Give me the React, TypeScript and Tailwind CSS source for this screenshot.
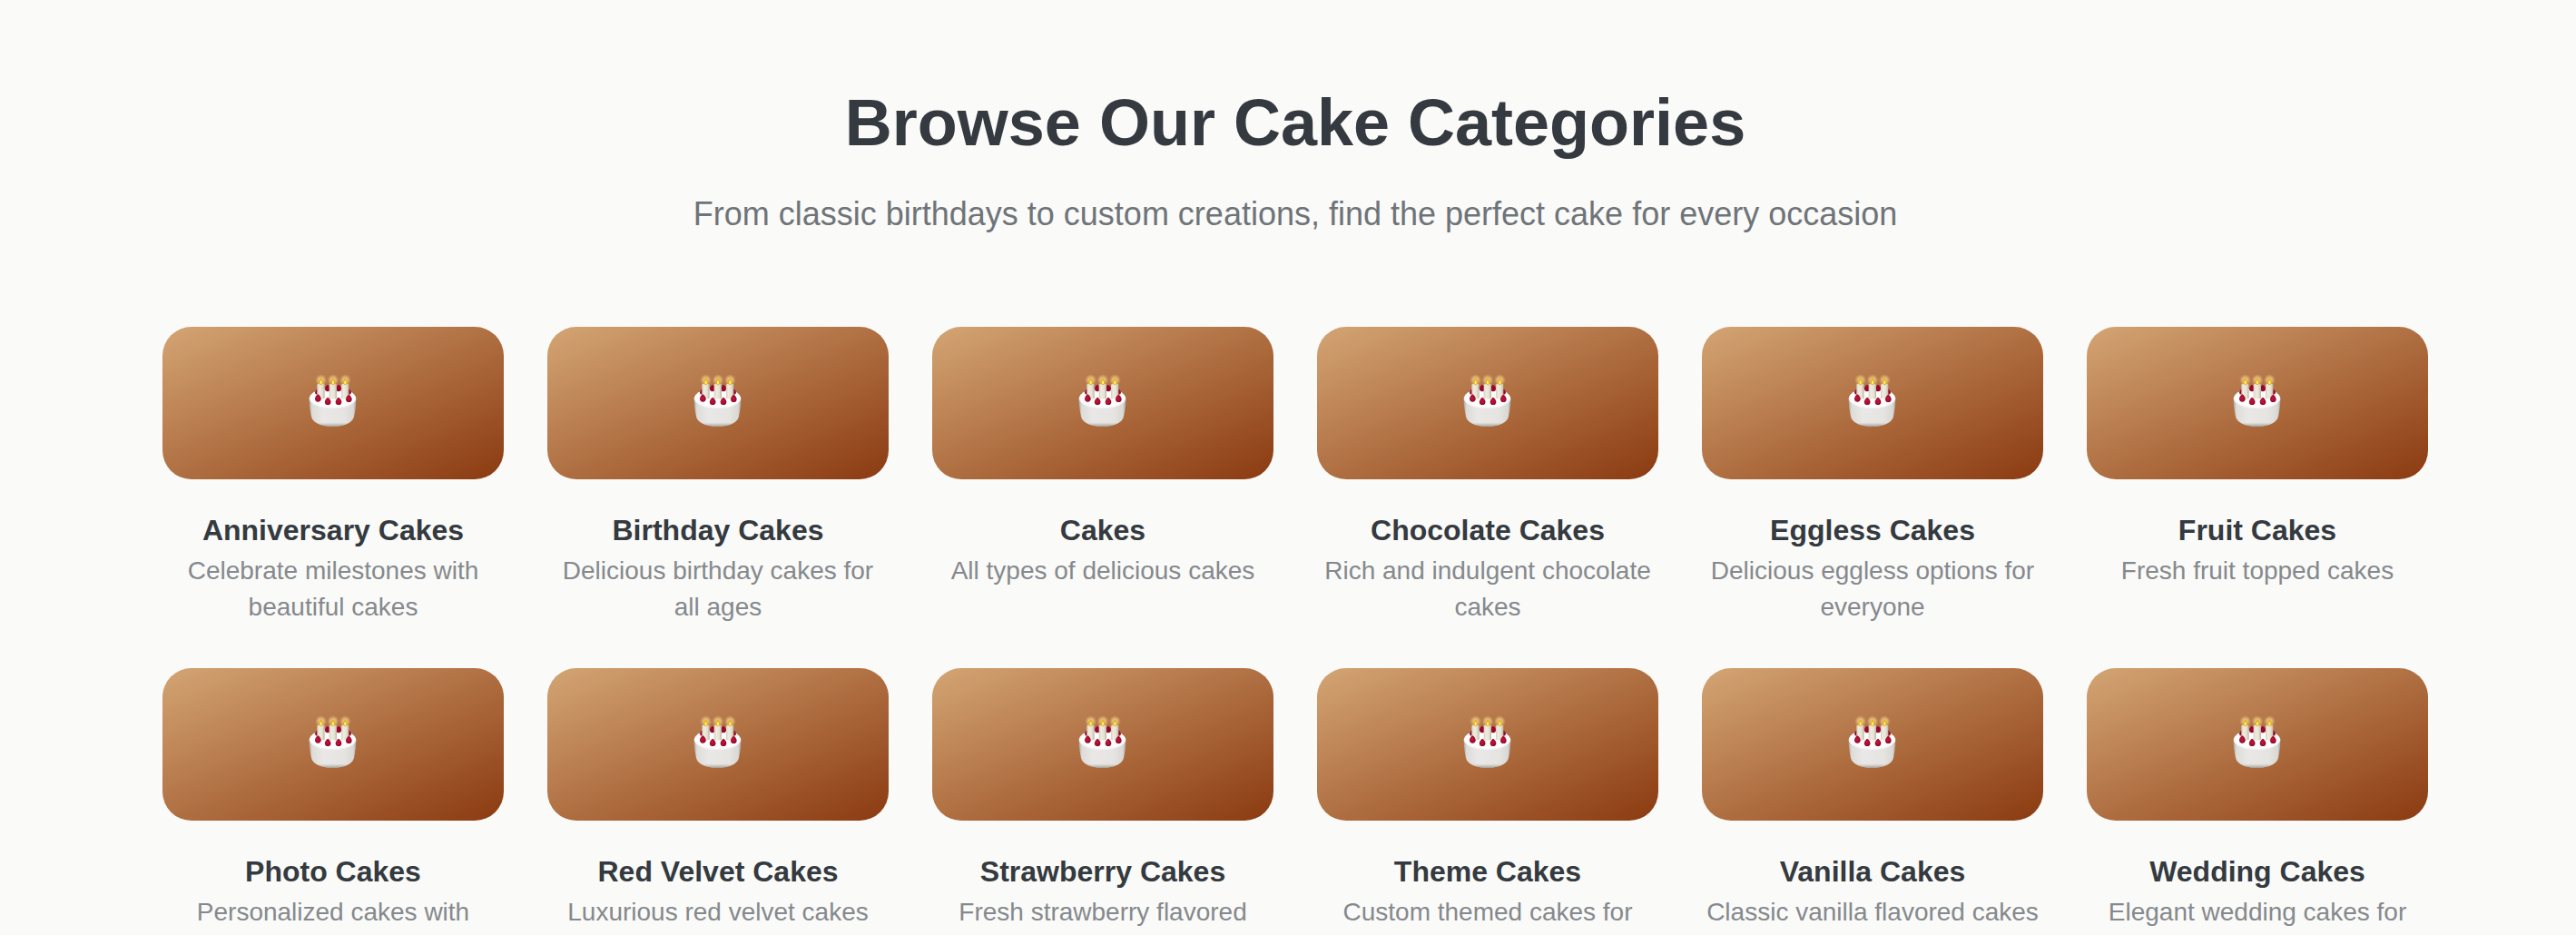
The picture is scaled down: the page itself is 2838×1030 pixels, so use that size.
const categories = [
  { name: "Anniversary Cakes", text: "Celebrate milestones with beautiful cakes" },
  { name: "Birthday Cakes", text: "Delicious birthday cakes for all ages" },
  { name: "Cakes", text: "All types of delicious cakes" },
  { name: "Chocolate Cakes", text: "Rich and indulgent chocolate cakes" },
  { name: "Eggless Cakes", text: "Delicious eggless options for everyone" },
  { name: "Fruit Cakes", text: "Fresh fruit topped cakes" },
  { name: "Photo Cakes", text: "Personalized cakes with" },
  { name: "Red Velvet Cakes", text: "Luxurious red velvet cakes" },
  { name: "Strawberry Cakes", text: "Fresh strawberry flavored" },
  { name: "Theme Cakes", text: "Custom themed cakes for" },
  { name: "Vanilla Cakes", text: "Classic vanilla flavored cakes" },
  { name: "Wedding Cakes", text: "Elegant wedding cakes for" },
];

function CakeDefs() {
  return (
    <svg className="absolute h-0 w-0" aria-hidden="true">
      <defs>
        <linearGradient id="side" x1="0" x2="1" y1="0" y2="0">
          <stop offset="0" stopColor="#aaa6a3" />
          <stop offset="0.06" stopColor="#dddcd9" />
          <stop offset="0.3" stopColor="#e9e8e6" />
          <stop offset="0.75" stopColor="#e5e4e1" />
          <stop offset="0.94" stopColor="#dad8d5" />
          <stop offset="1" stopColor="#a8a4a0" />
        </linearGradient>
        <linearGradient id="shade" x1="0" x2="0" y1="0" y2="1">
          <stop offset="0.85" stopColor="#a8a49c" stopOpacity="0" />
          <stop offset="1" stopColor="#8c887f" stopOpacity="0.8" />
        </linearGradient>
        <linearGradient id="wax" x1="0" x2="1" y1="0" y2="0">
          <stop offset="0" stopColor="#d4cfbf" />
          <stop offset="0.3" stopColor="#efecdf" />
          <stop offset="0.7" stopColor="#e6e2d2" />
          <stop offset="1" stopColor="#b9b3a0" />
        </linearGradient>
        <radialGradient id="glow">
          <stop offset="0" stopColor="#ffe9a0" stopOpacity="0.95" />
          <stop offset="0.5" stopColor="#f6d391" stopOpacity="0.6" />
          <stop offset="1" stopColor="#e8b878" stopOpacity="0" />
        </radialGradient>
        <radialGradient id="berry" cx="0.45" cy="0.5">
          <stop offset="0" stopColor="#c0163c" />
          <stop offset="0.6" stopColor="#ae0d32" />
          <stop offset="1" stopColor="#8c0a28" />
        </radialGradient>
      </defs>
    </svg>
  );
}

const berryPath = "M0 -13C4 -11 10 -4 10 2C10 9 6 12 0 12C-6 12 -10 9 -10 2C-10 -4 -4 -11 0 -13Z";
const bodyPath =
  "M62 147C62 170 66 195 70 210C76 230 108 240 139.500 240C171 240 203 230 209 210C213 195 217 170 217 147Z";

function Cake() {
  return (
    <svg viewBox="51 63 180 198" className="h-[66px] w-[60px]" role="img" aria-label="Birthday cake">
      <path d={bodyPath} fill="url(#side)" />
      <path d={bodyPath} fill="url(#shade)" />
      <ellipse cx="139.500" cy="147" rx="77.500" ry="34" fill="#f0efee" />
      <ellipse cx="139.500" cy="145" rx="75" ry="32" fill="#fdfdfd" />
      <g fill="#98092d">
        <path d={berryPath} transform="translate(89 125) scale(.75)" />
        <path d={berryPath} transform="translate(123 113) scale(.9)" />
        <path d={berryPath} transform="translate(159 113) scale(.9)" />
        <path d={berryPath} transform="translate(193 125) scale(.75)" />
      </g>
      {[101, 141, 181].map((x) => (
        <g key={x}>
          <path
            d={`M${x - 13} 101C${x - 13} 96 ${x + 12} 96 ${x + 12} 101V145C${x + 12} 150 ${x - 13} 150 ${x - 13} 145Z`}
            fill="url(#wax)"
          />
          <circle cx={x} cy="86" r="20" fill="url(#glow)" />
          <path
            d={`M${x} 78C${x + 3} 84 ${x + 8} 89 ${x + 7} 95C${x + 6} 103 ${x - 6} 103 ${x - 7} 95C${x - 8} 89 ${x - 3} 84 ${x} 78Z`}
            fill="#e0b010"
          />
          <path d={`M${x} 86C${x + 5} 92 ${x + 4} 99 ${x} 99C${x - 4} 99 ${x - 5} 92 ${x} 86Z`} fill="#fff08a" />
        </g>
      ))}
      <g fill="url(#berry)">
        <path d={berryPath} transform="translate(91 146)" />
        <path d={berryPath} transform="translate(123.500 156)" />
        <path d={berryPath} transform="translate(159 156)" />
        <path d={berryPath} transform="translate(193 147)" />
      </g>
    </svg>
  );
}

export default function App() {
  return (
    <main className="h-[1030px] overflow-hidden bg-[#fafaf8] pt-[90px] pr-[163px] pl-[179px] text-center font-['Liberation_Sans',Arial,sans-serif]">
      <CakeDefs />
      <h1 className="text-[72px] leading-[90px] font-bold text-[#343a40]">Browse Our Cake Categories</h1>
      <p className="mt-7 mb-24 text-[36px] leading-[56px] text-[#6f7479]">
        From classic birthdays to custom creations, find the perfect cake for every occasion
      </p>
      <section className="grid grid-cols-6 gap-12">
        {categories.map((c) => (
          <article key={c.name} className="h-[328px]">
            <div className="flex h-[168px] items-center justify-center rounded-[32px] bg-[linear-gradient(to_bottom_right,#d4a574,#8b3a10)]">
              <Cake />
            </div>
            <h2 className="mt-9 text-[32px] leading-10 font-bold text-[#343a40]">{c.name}</h2>
            <p className="mt-[5px] text-[28px] leading-10 text-[#85898d]">{c.text}</p>
          </article>
        ))}
      </section>
    </main>
  );
}
